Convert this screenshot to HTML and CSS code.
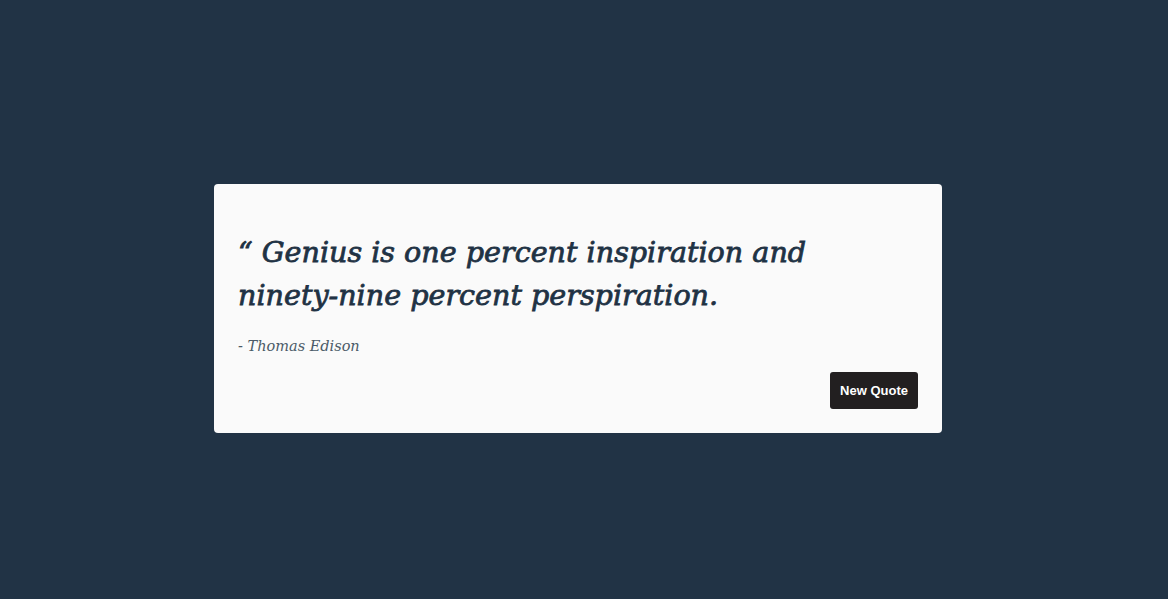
FILE: index.html
```html
<!DOCTYPE html>
<html lang="en">
<head>
<meta charset="utf-8">
<title>Quote Generator</title>
<link rel="stylesheet" href="styles.css">
</head>
<body>
<main class="page">
  <section class="card">
    <h1 class="quote">&ldquo; Genius is one percent inspiration and ninety-nine percent perspiration.</h1>
    <p class="author">- Thomas Edison</p>
    <div class="actions">
      <button class="btn">New Quote</button>
    </div>
  </section>
</main>
</body>
</html>
```

FILE: styles.css
```css
* { box-sizing: border-box; }
html, body { margin: 0; height: 100%; }
body {
  background: #213345;
  font-family: "DejaVu Serif", serif;
}
.page {
  height: 100%;
  display: flex;
  align-items: center;
  justify-content: center;
  padding: 18px 12px 0 0;
}
.card {
  width: 728px;
  background: #fafafa;
  border-radius: 4px;
  padding: 47px 24px 24px;
}
.quote {
  margin: 0;
  font-family: "DejaVu Serif", serif;
  font-style: italic;
  font-weight: 400;
  font-size: 28.6px;
  line-height: 43px;
  color: #1f3244;
  -webkit-text-stroke: 0.8px #1f3244;
  max-width: 600px;
}
.author {
  margin: 21px 0 0;
  font-family: "DejaVu Serif", serif;
  font-style: italic;
  font-size: 14.5px;
  color: #4b5a68;
}
.actions {
  display: flex;
  justify-content: flex-end;
  margin-top: 18px;
}
.btn {
  height: 37px;
  padding: 0 10px;
  border: 0;
  border-radius: 3px;
  background: #221f20;
  color: #fff;
  font-family: "Liberation Sans", Arial, sans-serif;
  font-weight: 700;
  font-size: 13px;
  cursor: pointer;
}
```
